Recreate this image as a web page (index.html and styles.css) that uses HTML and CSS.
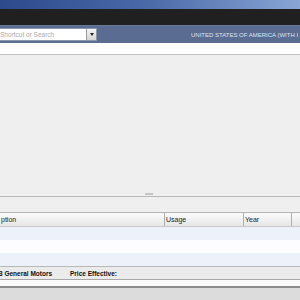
FILE: index.html
```html
<!DOCTYPE html>
<html>
<head>
<meta charset="utf-8">
<link rel="stylesheet" href="styles.css">
</head>
<body>
<div class="app">
  <div class="titlebar"></div>
  <div class="menubar"></div>
  <div class="toolbar">
    <div class="search">
      <span class="placeholder">Shortcut or Search</span>
      <span class="drop"><span class="arrow"></span></span>
    </div>
    <div class="region">UNITED STATES OF AMERICA (WITH I</div>
  </div>
  <div class="whiteband"></div>
  <div class="panel"><span class="grip"></span></div>
  <div class="gap"></div>
  <div class="table">
    <div class="thead">
      <div class="th c1">ption</div>
      <div class="th c2">Usage</div>
      <div class="th c3">Year</div>
      <div class="th c4"></div>
    </div>
    <div class="row alt"></div>
    <div class="row"></div>
    <div class="row alt"></div>
  </div>
  <div class="status">
    <span class="s1">3 General Motors</span>
    <span class="s2">Price Effective:</span>
  </div>
  <div class="bottomwhite"></div>
  <div class="bottom"></div>
</div>
</body>
</html>
```

FILE: styles.css
```css
html, body { margin: 0; padding: 0; }
body { width: 300px; height: 300px; overflow: hidden; font-family: "Liberation Sans", Arial, sans-serif; background: #dcdcdc; }
.app { display: flex; flex-direction: column; width: 300px; height: 300px; }
.titlebar { height: 9px; background: linear-gradient(to right, #2c4a8c, #4a6aa8 50%, #8aa6d6); }
.menubar { height: 16px; background: #202020; border-bottom: 1px solid #6a7896; }
.toolbar { height: 17px; background: #5a6c92; display: flex; align-items: center; }
.search { width: 97px; height: 13px; background: #fff; display: flex; align-items: center; justify-content: space-between; box-sizing: border-box; border: 1px solid #8a96ae; border-left: none; }
.placeholder { font-size: 6.5px; color: #aaaaaa; white-space: nowrap; margin-left: 0; }
.drop { width: 9px; height: 11px; background: linear-gradient(#f4f4f4, #d6d6d6); border-left: 1px solid #9a9a9a; display: flex; align-items: center; justify-content: center; }
.arrow { width: 0; height: 0; border-left: 2.5px solid transparent; border-right: 2.5px solid transparent; border-top: 3px solid #222; }
.region { font-size: 6px; color: #dde4ef; white-space: nowrap; margin-left: auto; overflow: hidden; width: 109px; }
.whiteband { height: 11px; background: #fdfdfd; border-bottom: 1px solid #c4c4c4; }
.panel { height: 141px; background: #efefef; border-bottom: 1px solid #b8b8b8; position: relative; }
.grip { position: absolute; left: 145px; bottom: 1px; width: 8px; height: 2px; background: #c4c4c4; }
.gap { height: 15px; background: #efefef; border-bottom: 1px solid #b4b4b4; }
.table { background: #fff; }
.thead { display: flex; height: 13px; background: linear-gradient(#fbfbfb, #e6e6e6); border-bottom: 1px solid #c8c8c8; }
.th { font-size: 7px; color: #222; line-height: 13px; box-sizing: border-box; border-right: 1px solid #b0b0b0; padding-left: 1px; white-space: nowrap; }
.c1 { width: 165px; }
.c2 { width: 79px; }
.c3 { width: 48px; }
.c4 { width: 8px; border-right: none; }
.row { height: 13px; background: #fdfdff; }
.row.alt { background: #edf2fa; }
.status { height: 12px; background: #ebebeb; border-top: 1px solid #b8b8b8; border-bottom: 1px solid #a8a8a8; display: flex; align-items: center; font-size: 6.5px; font-weight: bold; color: #111; white-space: nowrap; }
.s1 { width: 71px; margin-left: -1px; }
.bottomwhite { height: 6px; background: #fafafa; border-bottom: 2px solid #8c8c8c; }
.bottom { flex: 1; background: #dcdcdc; }
```
